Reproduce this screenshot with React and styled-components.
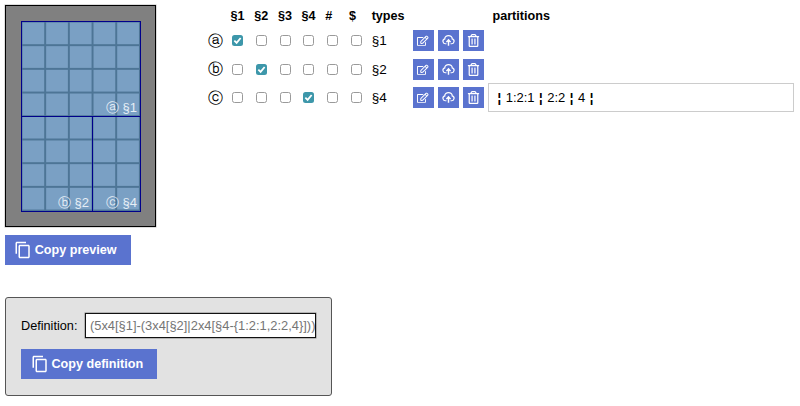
import React from 'react';
import styled, { createGlobalStyle } from 'styled-components';
import { FaRegEdit, FaRegTrashAlt } from 'react-icons/fa';
import { MdOutlineContentCopy } from 'react-icons/md';

const GlobalStyle = createGlobalStyle`
  html, body {
    margin: 0;
    background: #fff;
    font-family: 'Liberation Sans', Arial, sans-serif;
    font-size: 13px;
    color: #000;
  }
`;

const Page = styled.div`
  width: 800px;
  height: 406px;
  overflow: hidden;
  padding: 5px 0 0 5px;
  box-sizing: border-box;
`;

const Top = styled.div`
  display: flex;
  align-items: flex-start;
`;

const Left = styled.div`
  display: flex;
  flex-direction: column;
  align-items: flex-start;
  width: 195px;
`;

const Preview = styled.div`
  width: 151px;
  height: 222px;
  box-sizing: border-box;
  border: 1px solid #000;
  box-shadow: 0 0 0 0.5px #bbb;
  background: #808080;
  padding: 15px;
`;

const Plan = styled.div`
  width: 120px;
  height: 191px;
  display: grid;
  grid-template-columns: 72px 48px;
  grid-template-rows: 96px 95px;
`;

const Region = styled.div`
  grid-column: ${(p) => p.$column};
  position: relative;
  box-sizing: border-box;
  border: 1px solid #00008b;
  border-top-width: ${(p) => (p.$lower ? '0' : '1px')};
  border-left-width: ${(p) => (p.$right ? '0' : '1px')};
  background-color: #7aa0c4;
  background-image:
    linear-gradient(to right, #4d7596 1.6px, transparent 1.6px),
    linear-gradient(to bottom, #4d7596 1.6px, transparent 1.6px);
  background-size: 23.7px 23.7px;
  background-origin: border-box;
  background-position: ${(p) => (p.$right ? '-1.5px' : '-0.5px')} ${(p) => (p.$lower ? '-2.2px' : '-0.5px')};
`;

const RegionLabel = styled.span`
  position: absolute;
  right: 3px;
  bottom: 0;
  color: #e6eef6;
  font-size: 13px;
  line-height: 16px;
  white-space: nowrap;
`;

const Button = styled.button`
  display: flex;
  align-items: center;
  gap: 3px;
  border: none;
  padding: 0 0 0 ${(p) => p.$pad};
  width: ${(p) => p.$width};
  height: 30px;
  background: #5a73cf;
  color: #fff;
  font-family: inherit;
  font-size: 12.6px;
  font-weight: bold;
  white-space: nowrap;
  svg {
    font-size: 18px;
    flex: none;
  }
`;

const CopyPreview = styled(Button)`
  margin-top: 8px;
`;

const Table = styled.div`
  display: grid;
  grid-template-columns: 26px repeat(6, 23.7px) 44.5px 25.3px 25.3px 25.3px 305px;
  grid-template-rows: 21.5px repeat(3, 28.5px);
  align-items: center;
`;

const Head = styled.div`
  font-weight: bold;
  font-size: 12.6px;
  padding-left: ${(p) => p.$inset || '4.5px'};
  grid-column: ${(p) => p.$column || 'auto'};
`;

const Circle = styled.div`
  font-size: 15px;
  text-align: center;
  padding: 1px 0 0 4px;
`;

const Cell = styled.div`
  display: flex;
  justify-content: center;
`;

const Box = styled.span`
  display: flex;
  align-items: center;
  justify-content: center;
  width: 11px;
  height: 11px;
  box-sizing: border-box;
  border-radius: 2.5px;
  border: ${(p) => (p.$checked ? 'none' : '1px solid #9a9a9a')};
  background: ${(p) => (p.$checked ? '#3d97aa' : '#fff')};
`;

const TypeName = styled.div`
  font-size: 13.5px;
  padding-left: 3.5px;
`;

const IconButton = styled.div`
  width: 21px;
  height: 21px;
  background: #5a73cf;
  color: #fff;
  display: flex;
  align-items: center;
  justify-content: center;
  font-size: ${(p) => p.$size};
`;

const Partitions = styled.div`
  height: 29px;
  margin-left: -1px;
  box-sizing: border-box;
  border: 1px solid #ccc;
  display: flex;
  align-items: center;
  padding-left: 9px;
  font-size: 13px;
  span {
    font-weight: bold;
    margin: 0 4.5px;
  }
  span:first-child {
    margin-left: 0;
  }
`;

const Definition = styled.div`
  margin-top: 32px;
  width: 327px;
  height: 99px;
  box-sizing: border-box;
  border: 1px solid #555;
  border-radius: 3px;
  background: #e2e2e2;
  padding: 15px;
`;

const DefinitionRow = styled.div`
  display: flex;
  align-items: center;
  gap: 8px;
  margin-bottom: 11px;
  font-size: 12.7px;
`;

const DefinitionInput = styled.div`
  width: 231px;
  height: 25px;
  box-sizing: border-box;
  border: 1px solid #111;
  box-shadow: 0 0 0 0.5px rgba(0, 0, 0, 0.4);
  background: #fff;
  color: #757575;
  font-size: 12.9px;
  line-height: 23px;
  padding-left: 3.5px;
  white-space: nowrap;
  overflow: hidden;
`;

const Check = () => (
  <svg width="9" height="9" viewBox="0 0 10 10" fill="none" stroke="#fff" strokeWidth="2">
    <path d="M1.5 5.2 L4 7.6 L8.5 2.2" />
  </svg>
);

const UploadIcon = () => (
  <svg width="13" height="13" viewBox="0 0 16 16" fill="none" stroke="#fff" strokeWidth="1.5">
    <path d="M5.5 12 H4 A3 3 0 0 1 3.4 6.1 A4.6 4.2 0 0 1 12.6 6.1 A3 3 0 0 1 12 12 H10.5" />
    <path d="M8 14.5 V7.5 M5.4 10 L8 7.2 L10.6 10" strokeWidth="1.8" />
  </svg>
);

const rows = [
  { mark: 'ⓐ', type: '§1', on: 0 },
  { mark: 'ⓑ', type: '§2', on: 1 },
  { mark: 'ⓒ', type: '§4', on: 3 },
];

export default function App() {
  return (
    <Page>
      <GlobalStyle />
      <Top>
        <Left>
          <Preview>
            <Plan>
              <Region $column="1 / 3">
                <RegionLabel>ⓐ §1</RegionLabel>
              </Region>
              <Region $column="1 / 2" $lower>
                <RegionLabel>ⓑ §2</RegionLabel>
              </Region>
              <Region $column="2 / 3" $lower $right>
                <RegionLabel>ⓒ §4</RegionLabel>
              </Region>
            </Plan>
          </Preview>
          <CopyPreview $width="126px" $pad="8.75px">
            <MdOutlineContentCopy />
            Copy preview
          </CopyPreview>
        </Left>
        <Table>
          <Head $column="2">§1</Head>
          <Head>§2</Head>
          <Head>§3</Head>
          <Head>§4</Head>
          <Head>#</Head>
          <Head>$</Head>
          <Head $inset="3.5px">types</Head>
          <Head $column="12" $inset="4px">partitions</Head>
          {rows.map((row, r) => (
            <React.Fragment key={row.type}>
              <Circle>{row.mark}</Circle>
              {[0, 1, 2, 3, 4, 5].map((i) => (
                <Cell key={i}>
                  <Box $checked={i === row.on}>{i === row.on && <Check />}</Box>
                </Cell>
              ))}
              <TypeName>{row.type}</TypeName>
              <IconButton $size="11.5px"><FaRegEdit /></IconButton>
              <IconButton><UploadIcon /></IconButton>
              <IconButton $size="13px"><FaRegTrashAlt /></IconButton>
              {r === 2 ? (
                <Partitions>
                  <span>¦</span>1:2:1<span>¦</span>2:2<span>¦</span>4<span>¦</span>
                </Partitions>
              ) : (
                <div />
              )}
            </React.Fragment>
          ))}
        </Table>
      </Top>
      <Definition>
        <DefinitionRow>
          Definition:
          <DefinitionInput>(5x4[§1]-(3x4[§2]|2x4[§4-{'{'}1:2:1,2:2,4{'}'}]))</DefinitionInput>
        </DefinitionRow>
        <Button $width="136px" $pad="9.5px">
          <MdOutlineContentCopy />
          Copy definition
        </Button>
      </Definition>
    </Page>
  );
}
